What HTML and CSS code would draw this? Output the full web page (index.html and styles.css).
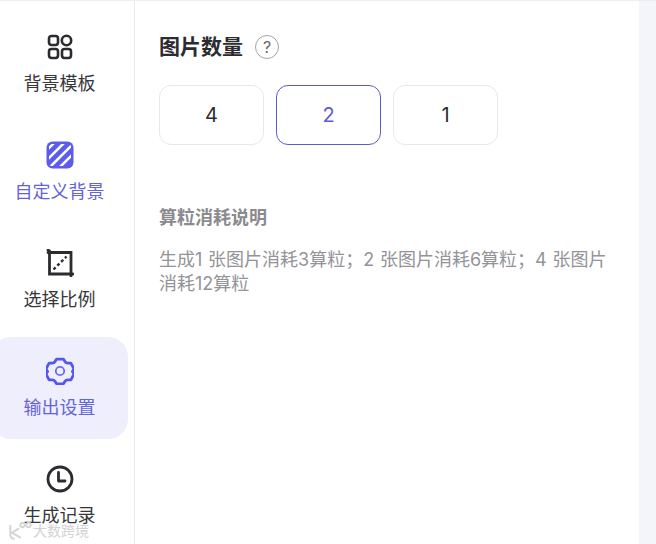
FILE: index.html
```html
<!DOCTYPE html>
<html lang="zh">
<head>
<meta charset="utf-8">
<title>输出设置</title>
<link rel="stylesheet" href="styles.css">
</head>
<body>
<div class="app">
  <nav class="side">
    <div class="item">
      <svg class="ico" viewBox="0 0 28 28" fill="none" stroke="#2b2b30" stroke-width="2.6"><rect x="3" y="3" width="9" height="9" rx="2.4"/><circle cx="20.5" cy="7.5" r="4.7"/><rect x="3" y="16" width="9" height="9" rx="2.4"/><rect x="16" y="16" width="9" height="9" rx="2.4"/></svg>
      <span>背景模板</span>
    </div>
    <div class="item on-text">
      <svg class="ico" viewBox="0 0 28 28"><defs><clipPath id="c"><rect x="3" y="3" width="22" height="22" rx="3"/></clipPath></defs><rect x="0.5" y="0.5" width="27" height="27" rx="6" fill="#5d5cea"/><g clip-path="url(#c)" stroke="#fff" stroke-width="2.6"><path d="M-3 13 13 -3M-3 23 23 -3M3 27 29 1M13 27 29 11"/></g></svg>
      <span>自定义背景</span>
    </div>
    <div class="item">
      <svg class="ico" viewBox="0 0 28 28" fill="none" stroke="#2b2b30" stroke-width="2.800" stroke-linecap="round"><path d="M2 1 3.500 2V25H27"/><path d="M2 3.500H25V27"/><path d="M7.500 20.500 20.500 7.500" stroke-width="2.400" stroke-dasharray="3 2.400" stroke-linecap="butt"/></svg>
      <span>选择比例</span>
    </div>
    <div class="item active on-text">
      <svg class="ico" viewBox="0 0 28 28" fill="none" stroke="#5457ea" stroke-width="2.700" stroke-linejoin="round"><path d="M10.700 2.500h6.600l1.600 2.500a3 3 0 0 0 2.600 1.400l3-.1 3 5.700-1.500 2.500 1.500 2.500-3 5.600-3-.1a3 3 0 0 0-2.600 1.400l-1.600 2.500h-6.600l-1.600-2.500a3 3 0 0 0-2.600-1.400l-3 .1-3-5.600 1.500-2.500-1.500-2.500 3-5.700 3 .1a3 3 0 0 0 2.600-1.400z" transform="translate(-.5 -.5) scale(1.036)"/><circle cx="14" cy="14" r="4.200" stroke-width="1.800" stroke="#6a6cec"/></svg>
      <span>输出设置</span>
    </div>
    <div class="item">
      <svg class="ico" viewBox="0 0 28 28" fill="none" stroke="#2b2b30" stroke-width="2.800"><circle cx="14" cy="14" r="12"/><path d="M12.500 7.500V16H19" stroke-linecap="round" stroke-linejoin="round"/></svg>
      <span>生成记录</span>
    </div>
  </nav>
  <main class="main">
    <div class="heading">
      <h2>图片数量</h2>
      <span class="help">?</span>
    </div>
    <div class="options">
      <div class="opt">4</div>
      <div class="opt sel">2</div>
      <div class="opt">1</div>
    </div>
    <h3>算粒消耗说明</h3>
    <p>生成1 张图片消耗3算粒；2 张图片消耗6算粒；4 张图片消耗12算粒</p>
  </main>
  <div class="rail"></div>
</div>
<div class="mark">
  <svg class="mark-logo" viewBox="0 0 30 22" fill="none" stroke="#d4d4d4" stroke-width="2.200"><path d="M5 4V15Q5 20 10 20M15 8 7 13 17 19"/><circle cx="19" cy="4" r="2.500"/><circle cx="26" cy="4" r="2.500"/></svg>
  <span>大数跨境</span>
</div>
</body>
</html>
```
FILE: styles.css
```css
* { box-sizing: border-box; }
html, body { margin: 0; height: 100%; overflow: hidden; background: #fff; }
body { font-family: Inter, "Noto Sans CJK SC", "Liberation Sans", sans-serif; color: #2b2b30; position: relative; }
.app { display: flex; height: 544px; border-top: 1px solid #eeeef0; }
.side { width: 135px; flex: none; border-right: 1px solid #e9e9ee; padding-top: 12px; padding-right: 6px; display: flex; flex-direction: column; gap: 6px; overflow: hidden; }
.item { height: 102px; flex: none; margin-left: -9px; display: flex; flex-direction: column; align-items: center; border-radius: 0 20px 20px 0; padding-top: 20px; font-size: 18px; line-height: 24px; gap: 11px; color: #36363b; }
.ico { width: 28px; height: 28px; flex: none; }
.on-text { color: #6464d8; }
.active { background: #eeeefd; border-radius: 20px; }
.main { flex: 1; padding: 32px 0 0 24px; min-width: 0; }
.heading { display: flex; align-items: center; gap: 12px; height: 28px; }
h2 { margin: 0; font-size: 21px; line-height: 28px; font-weight: 700; color: #2b2b30; }
.help { width: 24px; height: 24px; border: 1px solid #a3a3a8; border-radius: 50%; display: flex; align-items: center; justify-content: center; font-size: 16px; color: #66666c; }
.options { display: flex; gap: 12px; margin-top: 24px; }
.opt { width: 105px; height: 60px; border: 1px solid #e8e8ec; border-radius: 12px; display: flex; align-items: center; justify-content: center; font-size: 20px; color: #2b2b30; }
.sel { border-color: #5b5bd6; color: #5b5bd6; }
h3 { margin: 61px 0 0; font-size: 18px; line-height: 24px; font-weight: 700; color: #8a8a8f; }
p { margin: 18px 0 0; width: 456px; font-size: 18px; line-height: 24px; word-spacing: .7px; color: #939398; }
.rail { width: 17px; flex: none; background: #f4f5fb; }
.mark { position: absolute; left: 6px; top: 520px; display: flex; align-items: center; gap: 1px; color: #d2d2d2; font-size: 14px; line-height: 22px; }
.mark-logo { width: 26px; height: 20px; }
```
